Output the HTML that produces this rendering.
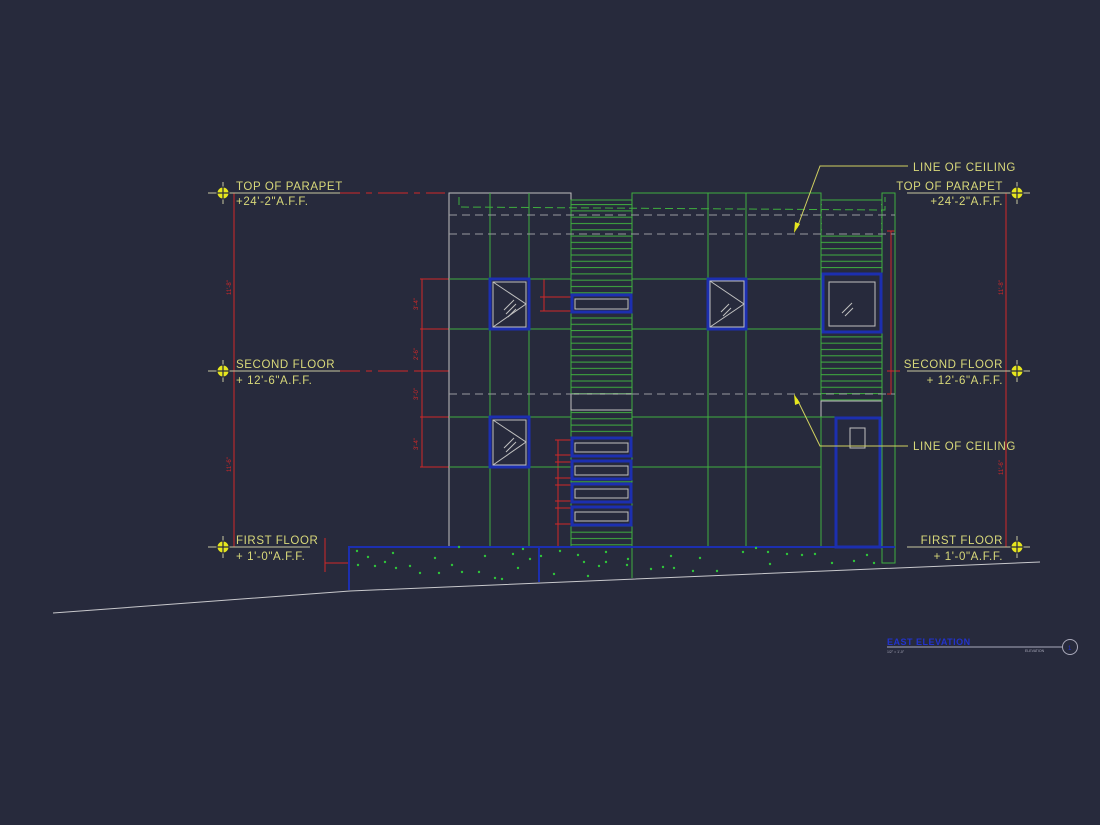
<!DOCTYPE html>
<html><head><meta charset="utf-8"><style>
html,body{margin:0;padding:0;background:#272a3c;}
svg{display:block}
text{font-family:"Liberation Sans",sans-serif;}
</style></head><body>
<svg width="1100" height="825" viewBox="0 0 1100 825" xmlns="http://www.w3.org/2000/svg">
<defs>
<pattern id="h" x="0" y="0" width="10" height="6.3" patternUnits="userSpaceOnUse">
<line x1="0" y1="3" x2="10" y2="3" stroke="#3fae3f" stroke-width="1"/>
</pattern>
</defs>
<rect width="1100" height="825" fill="#272a3c"/>
<polyline points="53,613 350,591 1040,562" fill="none" stroke="#c8c8cc" stroke-width="1"/>
<g stroke="#d02828" stroke-width="1" fill="none">
<line x1="234" y1="193" x2="234" y2="547"/>
<line x1="1006" y1="193" x2="1006" y2="547"/>
<line x1="330" y1="193" x2="445" y2="193" stroke-dasharray="30,6,6,6"/>
<line x1="330" y1="371" x2="445" y2="371" stroke-dasharray="30,6,6,6"/>
<line x1="422" y1="279" x2="422" y2="467"/>
<line x1="420" y1="279" x2="490" y2="279"/><line x1="420" y1="329" x2="490" y2="329"/>
<line x1="420" y1="371" x2="449" y2="371"/><line x1="420" y1="417" x2="490" y2="417"/><line x1="420" y1="467" x2="490" y2="467"/>
<line x1="544" y1="279" x2="544" y2="311"/><line x1="540" y1="279" x2="571" y2="279"/><line x1="540" y1="297" x2="571" y2="297"/><line x1="540" y1="311" x2="571" y2="311"/>
<line x1="558" y1="440" x2="558" y2="547"/>
<line x1="555" y1="440" x2="571" y2="440"/><line x1="555" y1="455" x2="571" y2="455"/><line x1="555" y1="462" x2="571" y2="462"/><line x1="555" y1="478" x2="571" y2="478"/><line x1="555" y1="485" x2="571" y2="485"/><line x1="555" y1="501" x2="571" y2="501"/><line x1="555" y1="508" x2="571" y2="508"/><line x1="555" y1="524" x2="571" y2="524"/>
<line x1="325" y1="538" x2="325" y2="572"/><line x1="325" y1="563" x2="349" y2="563"/>
<line x1="891" y1="231" x2="891" y2="394"/><line x1="887" y1="231" x2="895" y2="231"/><line x1="887" y1="371" x2="900" y2="371"/><line x1="887" y1="394" x2="895" y2="394"/>
</g>
<g fill="#d02828" font-size="6"><text x="0" y="0" transform="translate(231,295) rotate(-90)">11'-8"</text><text x="0" y="0" transform="translate(231,472) rotate(-90)">11'-6"</text><text x="0" y="0" transform="translate(418,310) rotate(-90)">3'-4"</text><text x="0" y="0" transform="translate(418,360) rotate(-90)">2'-6"</text><text x="0" y="0" transform="translate(418,400) rotate(-90)">3'-0"</text><text x="0" y="0" transform="translate(418,450) rotate(-90)">3'-4"</text><text x="0" y="0" transform="translate(1003,295) rotate(-90)">11'-8"</text><text x="0" y="0" transform="translate(1003,475) rotate(-90)">11'-6"</text></g>
<g fill="none" stroke-width="1">
<rect x="449" y="193" width="122" height="354" stroke="#c0c0c0"/>
<line x1="490" y1="193" x2="490" y2="547" stroke="#3fae3f"/>
<line x1="529" y1="193" x2="529" y2="547" stroke="#3fae3f"/>
<rect x="571" y="200" width="61" height="347" fill="url(#h)" stroke="#3fae3f"/>
<rect x="571" y="394" width="61" height="16" fill="#272a3c" stroke="#c0c0c0"/>
<rect x="632" y="193" width="189" height="354" stroke="#3fae3f"/>
<line x1="708" y1="193" x2="708" y2="547" stroke="#3fae3f"/>
<line x1="746" y1="193" x2="746" y2="547" stroke="#3fae3f"/>
<rect x="821" y="200" width="61" height="217" fill="url(#h)" stroke="#3fae3f"/>
<rect x="822" y="201" width="59" height="32" fill="#272a3c" stroke="none"/>
<line x1="882" y1="193" x2="882" y2="417" stroke="#c0c0c0"/>
<rect x="821" y="401" width="61" height="16" fill="#272a3c" stroke="#c0c0c0"/>
<rect x="882" y="193" width="13" height="370" stroke="#3fae3f"/>
<line x1="632" y1="547" x2="632" y2="578" stroke="#3fae3f"/>
<g stroke="#3fae3f">
<line x1="449" y1="279" x2="571" y2="279"/><line x1="449" y1="329" x2="571" y2="329"/>
<line x1="449" y1="417" x2="571" y2="417"/><line x1="449" y1="467" x2="571" y2="467"/>
<line x1="632" y1="279" x2="821" y2="279"/><line x1="632" y1="329" x2="821" y2="329"/>
<line x1="632" y1="417" x2="835" y2="417"/><line x1="632" y1="467" x2="821" y2="467"/>
</g>
<g stroke="#9a9aa0" stroke-dasharray="8,5">
<line x1="449" y1="215" x2="895" y2="215"/><line x1="449" y1="234" x2="895" y2="234"/><line x1="449" y1="394" x2="895" y2="394"/>
</g>
<polyline points="459,197 459,207 885,210 885,197" stroke="#3fae3f" stroke-dasharray="8,4"/>
<g stroke="#1c2fb0" stroke-width="3" fill="#272a3c">
<rect x="490" y="279" width="39" height="50"/><rect x="490" y="417" width="39" height="50"/>
<rect x="708" y="279" width="38" height="50"/>
<rect x="823" y="274" width="58" height="58"/>
<rect x="836" y="418" width="44" height="129"/>
<rect x="572" y="295" width="59" height="17"/>
<rect x="572" y="438" width="59" height="18"/><rect x="572" y="461" width="59" height="18"/><rect x="572" y="484" width="59" height="18"/><rect x="572" y="507" width="59" height="18"/>
</g>
<g stroke="#c0c0c0">
<rect x="493" y="282" width="33" height="45"/><polyline points="493,282 526,304 493,327"/>
<rect x="493" y="420" width="33" height="45"/><polyline points="493,420 526,442 493,465"/>
<rect x="710" y="281" width="34" height="46"/><polyline points="710,281 744,304 710,327"/>
<rect x="829" y="282" width="46" height="44"/>
<rect x="850" y="428" width="15" height="20"/>
<rect x="575" y="299" width="53" height="10"/>
<rect x="575" y="443" width="53" height="9"/><rect x="575" y="466" width="53" height="9"/><rect x="575" y="489" width="53" height="9"/><rect x="575" y="512" width="53" height="9"/>
<path d="M504,310l10,-10M506,314l10,-10M508,317l8,-8M504,448l10,-10M506,452l10,-10M842,313l10,-10M845,316l8,-8M721,312l8,-8M723,316l8,-8"/>
</g>
<g stroke="#1c2fb0" stroke-width="2">
<polyline points="349,590 349,547 895,547"/>
<line x1="539" y1="547" x2="539" y2="582"/>
</g>
</g>
<g fill="#2fc43a">
<circle cx="357" cy="551" r="1.2"/><circle cx="358" cy="565" r="1.2"/><circle cx="368" cy="557" r="1.2"/><circle cx="375" cy="566" r="1.2"/><circle cx="385" cy="562" r="1.2"/><circle cx="393" cy="553" r="1.2"/><circle cx="396" cy="568" r="1.2"/><circle cx="410" cy="566" r="1.2"/><circle cx="420" cy="573" r="1.2"/><circle cx="435" cy="558" r="1.2"/><circle cx="439" cy="573" r="1.2"/><circle cx="452" cy="565" r="1.2"/><circle cx="459" cy="547" r="1.2"/><circle cx="462" cy="572" r="1.2"/><circle cx="479" cy="572" r="1.2"/><circle cx="485" cy="556" r="1.2"/><circle cx="495" cy="578" r="1.2"/><circle cx="502" cy="579" r="1.2"/><circle cx="513" cy="554" r="1.2"/><circle cx="518" cy="568" r="1.2"/><circle cx="523" cy="549" r="1.2"/><circle cx="530" cy="559" r="1.2"/><circle cx="541" cy="556" r="1.2"/><circle cx="554" cy="574" r="1.2"/><circle cx="560" cy="551" r="1.2"/><circle cx="578" cy="555" r="1.2"/><circle cx="584" cy="562" r="1.2"/><circle cx="606" cy="562" r="1.2"/><circle cx="599" cy="566" r="1.2"/><circle cx="588" cy="576" r="1.2"/><circle cx="606" cy="552" r="1.2"/><circle cx="628" cy="559" r="1.2"/><circle cx="627" cy="565" r="1.2"/><circle cx="651" cy="569" r="1.2"/><circle cx="663" cy="567" r="1.2"/><circle cx="671" cy="556" r="1.2"/><circle cx="674" cy="568" r="1.2"/><circle cx="693" cy="571" r="1.2"/><circle cx="700" cy="558" r="1.2"/><circle cx="717" cy="571" r="1.2"/><circle cx="743" cy="552" r="1.2"/><circle cx="756" cy="548" r="1.2"/><circle cx="770" cy="564" r="1.2"/><circle cx="768" cy="552" r="1.2"/><circle cx="787" cy="554" r="1.2"/><circle cx="802" cy="555" r="1.2"/><circle cx="815" cy="554" r="1.2"/><circle cx="832" cy="563" r="1.2"/><circle cx="854" cy="561" r="1.2"/><circle cx="867" cy="555" r="1.2"/><circle cx="874" cy="563" r="1.2"/>
</g>
<g stroke="#c8c8a0" stroke-width="1">
<line x1="208" y1="193" x2="340" y2="193"/><line x1="208" y1="371" x2="340" y2="371"/><line x1="208" y1="547" x2="310" y2="547"/>
<line x1="907" y1="193" x2="1030" y2="193"/><line x1="907" y1="371" x2="1030" y2="371"/><line x1="907" y1="547" x2="1030" y2="547"/>
<line x1="223" y1="182" x2="223" y2="204"/><line x1="223" y1="360" x2="223" y2="382"/><line x1="223" y1="536" x2="223" y2="558"/>
<line x1="1017" y1="182" x2="1017" y2="204"/><line x1="1017" y1="360" x2="1017" y2="382"/><line x1="1017" y1="536" x2="1017" y2="558"/>
</g>
<g fill="#e6e61e" stroke="#272a3c" stroke-width="1">
<circle cx="223" cy="193" r="6"/><circle cx="223" cy="371" r="6"/><circle cx="223" cy="547" r="6"/>
<circle cx="1017" cy="193" r="6"/><circle cx="1017" cy="371" r="6"/><circle cx="1017" cy="547" r="6"/>
</g>
<g stroke="#272a3c" stroke-width="1.2">
<path d="M217,193h12M223,187v12M217,371h12M223,365v12M217,547h12M223,541v12M1011,193h12M1017,187v12M1011,371h12M1017,365v12M1011,547h12M1017,541v12"/>
</g>
<g fill="#d8d87a" font-size="11.5" letter-spacing="0.6">
<text x="236" y="190">TOP OF PARAPET</text><text x="236" y="205">+24'-2"A.F.F.</text>
<text x="236" y="368">SECOND FLOOR</text><text x="236" y="384">+ 12'-6"A.F.F.</text>
<text x="236" y="544">FIRST FLOOR</text><text x="236" y="560">+ 1'-0"A.F.F.</text>
<g text-anchor="end">
<text x="1003" y="190">TOP OF PARAPET</text><text x="1003" y="205">+24'-2"A.F.F.</text>
<text x="1003" y="368">SECOND FLOOR</text><text x="1003" y="384">+ 12'-6"A.F.F.</text>
<text x="1003" y="544">FIRST FLOOR</text><text x="1003" y="560">+ 1'-0"A.F.F.</text>
</g>
<text x="913" y="171">LINE OF CEILING</text><text x="913" y="450">LINE OF CEILING</text>
</g>
<g stroke="#d0d060" fill="none"><polyline points="908,166 820,166 797,228"/><polyline points="908,446 820,446 797,399"/></g>
<g fill="#e6e61e"><polygon points="794,233 795,222 800,224"/><polygon points="794,394 795,405 800,403"/></g>
<text x="887" y="645" fill="#2233cc" font-size="9" font-weight="bold" letter-spacing="0.5">EAST ELEVATION</text>
<line x1="887" y1="647" x2="1062" y2="647" stroke="#aab" stroke-width="1"/>
<text x="887" y="653" fill="#aab" font-size="3.5">1/2" = 1'-0"</text>
<text x="1025" y="652" fill="#aab" font-size="3.5">ELEVATION</text>
<circle cx="1070" cy="647" r="7.5" fill="none" stroke="#aab" stroke-width="1"/>
<text x="1068" y="650" fill="#2233cc" font-size="6">1</text>
</svg>
</body></html>
